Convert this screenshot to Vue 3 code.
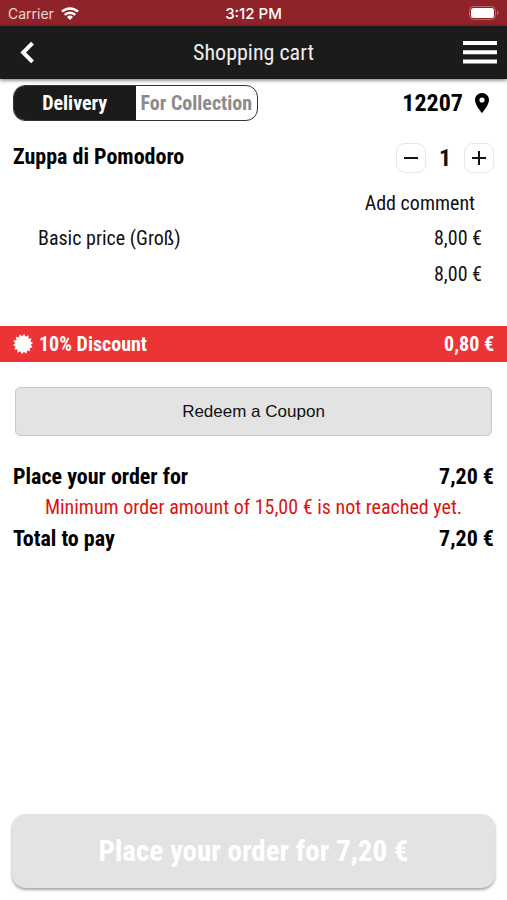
<script setup>
import { computed, ref } from 'vue'

const mode = ref('delivery')
const quantity = ref(1)
const unitPrice = 8

const euro = (value) => value.toFixed(2).replace('.', ',') + ' €'
const subtotal = computed(() => quantity.value * unitPrice)
const discount = computed(() => subtotal.value * 0.1)
const total = computed(() => subtotal.value - discount.value)
const belowMinimum = computed(() => total.value < 15)

// Fourteen-pointed seal used next to the discount label
const sealPoints = Array.from({ length: 28 }, (_, i) => {
  const radius = i % 2 ? 7.8 : 10.2
  const angle = ((i + 0.5) * Math.PI) / 14
  return `${(10 + radius * Math.sin(angle)).toFixed(2)},${(10 - radius * Math.cos(angle)).toFixed(2)}`
}).join(' ')
</script>

<template>
  <div class="app">
    <div class="status">
      <span class="carrier">
        Carrier
        <svg class="wifi" viewBox="0 0 18 13" aria-hidden="true">
          <path d="M1 4.700a11.300 11.300 0 0 1 16 0M3.700 7.900a7.500 7.500 0 0 1 10.600 0" fill="none" stroke="currentColor" stroke-width="2.500" />
          <path d="M9 13 6 10a4.300 4.300 0 0 1 6 0z" fill="currentColor" />
        </svg>
      </span>
      <span class="time">3:12 PM</span>
      <svg class="battery" viewBox="0 0 30 14" aria-hidden="true">
        <rect x="0.5" y="0.5" width="26" height="13" rx="4" fill="none" stroke="#b9686c" />
        <rect x="2" y="2" width="23" height="10" rx="2.5" fill="#fff" />
        <path d="M28 4.800c2 .6 2 3.800 0 4.400z" fill="#b9686c" />
      </svg>
    </div>

    <header class="bar">
      <button class="icon-button back-button" type="button" aria-label="Back">
        <svg class="back" viewBox="0 0 14 22" aria-hidden="true">
          <path d="M12.500 1.200 3.200 10.500l9.300 9.300" fill="none" stroke="currentColor" stroke-width="4" />
        </svg>
      </button>
      <h1>Shopping cart</h1>
      <button class="icon-button menu-button" type="button" aria-label="Menu">
        <svg class="menu" viewBox="0 0 34 24" aria-hidden="true">
          <path d="M0 2h34M0 11.200h34M0 20.400h34" stroke="currentColor" stroke-width="4" />
        </svg>
      </button>
    </header>

    <main>
      <div class="row mode-row">
        <div class="switch">
          <button type="button" :class="{ active: mode === 'delivery' }" @click="mode = 'delivery'">Delivery</button>
          <button type="button" :class="{ active: mode === 'collection' }" @click="mode = 'collection'">For Collection</button>
        </div>
        <a class="zip" href="#">
          12207
          <svg class="pin" viewBox="0 0 14 20" aria-hidden="true">
            <path d="M7 0C3.100 0 0 3.100 0 7c0 5.200 7 13 7 13s7-7.800 7-13c0-3.900-3.100-7-7-7zm0 9.600a2.600 2.600 0 1 1 0-5.200 2.600 2.600 0 0 1 0 5.200z" fill="currentColor" />
          </svg>
        </a>
      </div>

      <div class="row item-row">
        <h2>Zuppa di Pomodoro</h2>
        <div class="stepper">
          <button type="button" aria-label="Decrease" @click="quantity = Math.max(0, quantity - 1)">
            <svg viewBox="0 0 14 14" aria-hidden="true"><path d="M0 7h14" stroke="currentColor" stroke-width="2" /></svg>
          </button>
          <span class="quantity">{{ quantity }}</span>
          <button type="button" aria-label="Increase" @click="quantity++">
            <svg viewBox="0 0 14 14" aria-hidden="true"><path d="M0 7h14M7 0v14" stroke="currentColor" stroke-width="2" /></svg>
          </button>
        </div>
      </div>

      <div class="row comment-row"><a href="#">Add comment</a></div>
      <div class="row detail-row"><span>Basic price (Groß)</span><span>{{ euro(unitPrice) }}</span></div>
      <div class="row detail-row sum"><span>{{ euro(subtotal) }}</span></div>

      <div class="row discount">
        <span class="discount-label">
          <svg class="seal" viewBox="0 0 20 20" aria-hidden="true"><polygon :points="sealPoints" fill="currentColor" /></svg>
          10% Discount
        </span>
        <span>{{ euro(discount) }}</span>
      </div>

      <button class="coupon" type="button">Redeem a Coupon</button>

      <div class="row total-row"><span>Place your order for</span><span>{{ euro(total) }}</span></div>
      <p v-if="belowMinimum" class="warning">Minimum order amount of 15,00 € is not reached yet.</p>
      <div class="row total-row"><span>Total to pay</span><span>{{ euro(total) }}</span></div>
    </main>

    <button class="order" type="button" :disabled="belowMinimum">Place your order for {{ euro(total) }}</button>
  </div>
</template>

<style>
body {
  margin: 0;
  background: #fff;
}
</style>

<style scoped>
.app {
  display: flex;
  flex-direction: column;
  min-height: 100vh;
  box-sizing: border-box;
  font-family: "Roboto Condensed", Roboto, sans-serif;
  font-size: 20px;
  color: #111;
}
button {
  padding: 0;
  border: 0;
  background: none;
  font: inherit;
  color: inherit;
  cursor: pointer;
}
a {
  color: inherit;
  text-decoration: none;
}
svg {
  display: block;
  overflow: visible;
}
h1,
h2,
p {
  margin: 0;
}
.status {
  display: grid;
  grid-template-columns: 1fr auto 1fr;
  align-items: center;
  height: 26px;
  padding: 0 8px;
  box-sizing: border-box;
  background: #8f2329;
  color: #fff;
  font-family: Inter, sans-serif;
  font-size: 14px;
}
.carrier {
  display: flex;
  align-items: center;
  gap: 7px;
  color: #edd5d6;
}
.wifi {
  width: 18px;
  height: 13px;
  color: #fff;
}
.time {
  font-size: 15px;
  font-weight: 500;
}
.battery {
  width: 30px;
  height: 14px;
  justify-self: end;
}
.bar {
  display: grid;
  grid-template-columns: 1fr auto 1fr;
  align-items: center;
  height: 53px;
  padding: 0 10px;
  background: #1b1b1b;
  color: #fff;
  box-shadow: 0 1px 4px rgba(0, 0, 0, 0.6);
}
.bar h1 {
  font-size: 22px;
  font-weight: 400;
  color: #eee;
}
.icon-button {
  justify-self: start;
}
.back-button {
  padding: 0 10px;
}
.menu-button {
  justify-self: end;
}
.back {
  width: 14px;
  height: 22px;
}
.menu {
  width: 34px;
  height: 24px;
}
main {
  display: flex;
  flex-direction: column;
}
.row {
  display: flex;
  align-items: center;
  justify-content: space-between;
  padding: 0 13px;
}
.mode-row {
  padding-top: 6px;
}
.switch {
  display: grid;
  grid-template-columns: 1fr 1fr;
  width: 245px;
  height: 36px;
  box-sizing: border-box;
  border: 1px solid #333;
  border-radius: 12px;
  overflow: hidden;
  font-weight: 700;
  color: #8c8c8c;
}
.switch button {
  white-space: nowrap;
}
.switch .active {
  background: #1b1b1b;
  color: #fff;
}
.zip {
  display: flex;
  align-items: center;
  gap: 12px;
  padding-right: 5px;
  font-size: 24px;
  font-weight: 700;
  color: #000;
}
.pin {
  width: 14px;
  height: 20px;
}
.item-row {
  height: 64px;
  padding-top: 10px;
  box-sizing: border-box;
}
.item-row h2,
.total-row {
  font-size: 22px;
  font-weight: 700;
  color: #000;
}
.item-row h2 {
  padding-bottom: 4px;
}
.stepper {
  display: flex;
  align-items: center;
}
.stepper button {
  display: grid;
  place-items: center;
  width: 30px;
  height: 30px;
  border: 1px solid #e6e6e6;
  border-radius: 9px;
  box-sizing: border-box;
}
.stepper svg {
  width: 14px;
  height: 14px;
}
.quantity {
  width: 38px;
  text-align: center;
  font-size: 24px;
  font-weight: 700;
}
.comment-row {
  height: 35px;
  justify-content: flex-end;
  padding-right: 32px;
}
.detail-row {
  height: 36px;
  padding: 0 25px 0 38px;
}
.sum {
  justify-content: flex-end;
}
.discount {
  height: 36px;
  margin-top: 34px;
  background: #ec3336;
  color: #fff;
  font-weight: 700;
}
.discount-label {
  display: flex;
  align-items: center;
  gap: 6px;
}
.seal {
  width: 20px;
  height: 20px;
}
.coupon {
  height: 49px;
  margin: 25px 15px 24px;
  border: 1px solid #c8c8c8;
  border-radius: 5px;
  background: #e3e3e3;
  font-family: "Liberation Sans", sans-serif;
  font-size: 17px;
}
.total-row {
  height: 32px;
}
.warning {
  line-height: 30px;
  text-align: center;
  color: #dc1414;
}
.order {
  height: 74px;
  margin: auto 12px 12px;
  border-radius: 14px;
  background: #e3e3e3;
  box-shadow: 0 2px 3px rgba(0, 0, 0, 0.35);
  font-size: 29px;
  font-weight: 700;
  color: #fff;
}
</style>
